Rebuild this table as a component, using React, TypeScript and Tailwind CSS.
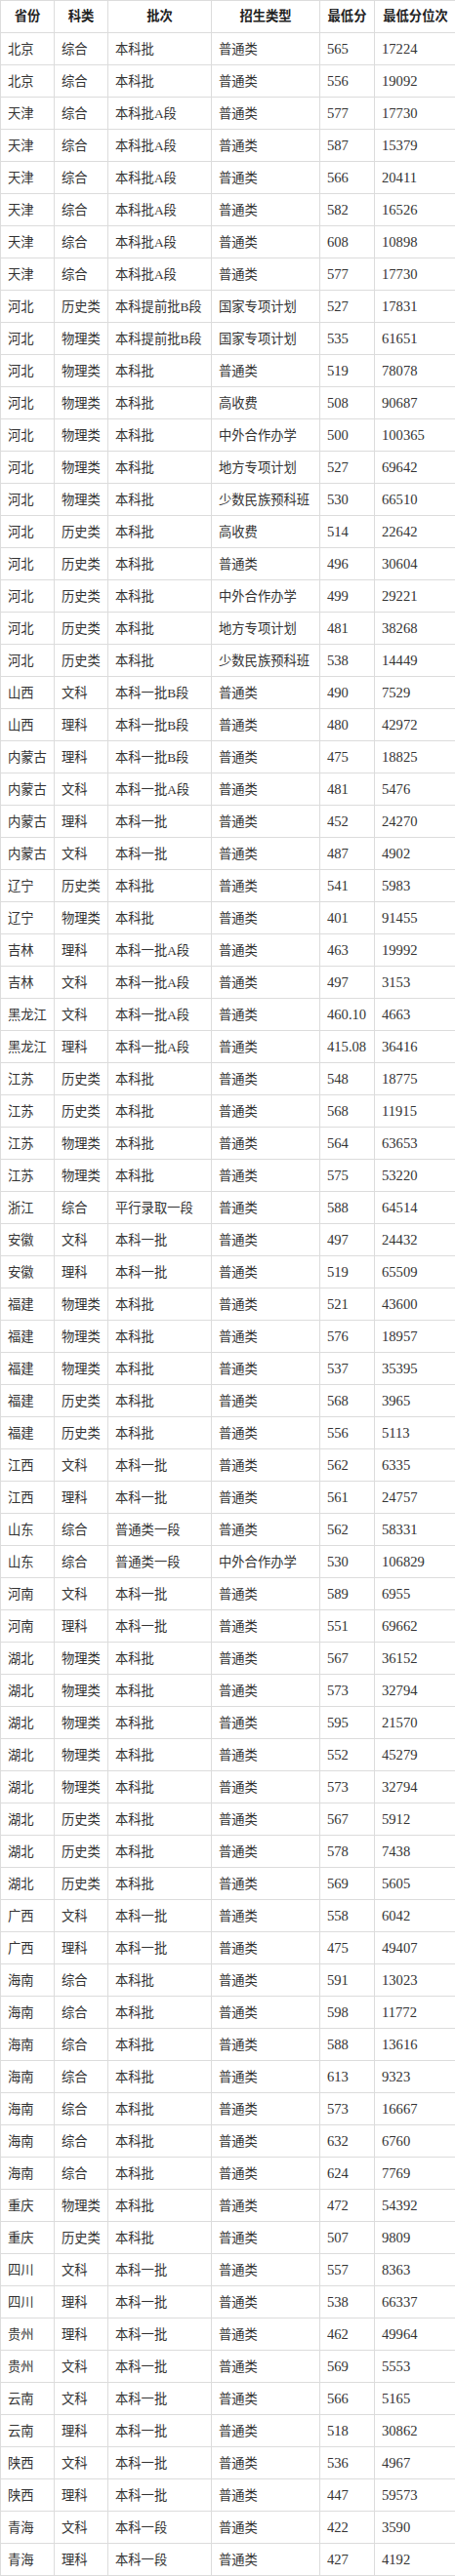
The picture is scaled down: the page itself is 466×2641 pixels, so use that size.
import React from "react";

const rows: string[][] = [
  ["北京", "综合", "本科批", "普通类", "565", "17224"],
  ["北京", "综合", "本科批", "普通类", "556", "19092"],
  ["天津", "综合", "本科批A段", "普通类", "577", "17730"],
  ["天津", "综合", "本科批A段", "普通类", "587", "15379"],
  ["天津", "综合", "本科批A段", "普通类", "566", "20411"],
  ["天津", "综合", "本科批A段", "普通类", "582", "16526"],
  ["天津", "综合", "本科批A段", "普通类", "608", "10898"],
  ["天津", "综合", "本科批A段", "普通类", "577", "17730"],
  ["河北", "历史类", "本科提前批B段", "国家专项计划", "527", "17831"],
  ["河北", "物理类", "本科提前批B段", "国家专项计划", "535", "61651"],
  ["河北", "物理类", "本科批", "普通类", "519", "78078"],
  ["河北", "物理类", "本科批", "高收费", "508", "90687"],
  ["河北", "物理类", "本科批", "中外合作办学", "500", "100365"],
  ["河北", "物理类", "本科批", "地方专项计划", "527", "69642"],
  ["河北", "物理类", "本科批", "少数民族预科班", "530", "66510"],
  ["河北", "历史类", "本科批", "高收费", "514", "22642"],
  ["河北", "历史类", "本科批", "普通类", "496", "30604"],
  ["河北", "历史类", "本科批", "中外合作办学", "499", "29221"],
  ["河北", "历史类", "本科批", "地方专项计划", "481", "38268"],
  ["河北", "历史类", "本科批", "少数民族预科班", "538", "14449"],
  ["山西", "文科", "本科一批B段", "普通类", "490", "7529"],
  ["山西", "理科", "本科一批B段", "普通类", "480", "42972"],
  ["内蒙古", "理科", "本科一批B段", "普通类", "475", "18825"],
  ["内蒙古", "文科", "本科一批A段", "普通类", "481", "5476"],
  ["内蒙古", "理科", "本科一批", "普通类", "452", "24270"],
  ["内蒙古", "文科", "本科一批", "普通类", "487", "4902"],
  ["辽宁", "历史类", "本科批", "普通类", "541", "5983"],
  ["辽宁", "物理类", "本科批", "普通类", "401", "91455"],
  ["吉林", "理科", "本科一批A段", "普通类", "463", "19992"],
  ["吉林", "文科", "本科一批A段", "普通类", "497", "3153"],
  ["黑龙江", "文科", "本科一批A段", "普通类", "460.10", "4663"],
  ["黑龙江", "理科", "本科一批A段", "普通类", "415.08", "36416"],
  ["江苏", "历史类", "本科批", "普通类", "548", "18775"],
  ["江苏", "历史类", "本科批", "普通类", "568", "11915"],
  ["江苏", "物理类", "本科批", "普通类", "564", "63653"],
  ["江苏", "物理类", "本科批", "普通类", "575", "53220"],
  ["浙江", "综合", "平行录取一段", "普通类", "588", "64514"],
  ["安徽", "文科", "本科一批", "普通类", "497", "24432"],
  ["安徽", "理科", "本科一批", "普通类", "519", "65509"],
  ["福建", "物理类", "本科批", "普通类", "521", "43600"],
  ["福建", "物理类", "本科批", "普通类", "576", "18957"],
  ["福建", "物理类", "本科批", "普通类", "537", "35395"],
  ["福建", "历史类", "本科批", "普通类", "568", "3965"],
  ["福建", "历史类", "本科批", "普通类", "556", "5113"],
  ["江西", "文科", "本科一批", "普通类", "562", "6335"],
  ["江西", "理科", "本科一批", "普通类", "561", "24757"],
  ["山东", "综合", "普通类一段", "普通类", "562", "58331"],
  ["山东", "综合", "普通类一段", "中外合作办学", "530", "106829"],
  ["河南", "文科", "本科一批", "普通类", "589", "6955"],
  ["河南", "理科", "本科一批", "普通类", "551", "69662"],
  ["湖北", "物理类", "本科批", "普通类", "567", "36152"],
  ["湖北", "物理类", "本科批", "普通类", "573", "32794"],
  ["湖北", "物理类", "本科批", "普通类", "595", "21570"],
  ["湖北", "物理类", "本科批", "普通类", "552", "45279"],
  ["湖北", "物理类", "本科批", "普通类", "573", "32794"],
  ["湖北", "历史类", "本科批", "普通类", "567", "5912"],
  ["湖北", "历史类", "本科批", "普通类", "578", "7438"],
  ["湖北", "历史类", "本科批", "普通类", "569", "5605"],
  ["广西", "文科", "本科一批", "普通类", "558", "6042"],
  ["广西", "理科", "本科一批", "普通类", "475", "49407"],
  ["海南", "综合", "本科批", "普通类", "591", "13023"],
  ["海南", "综合", "本科批", "普通类", "598", "11772"],
  ["海南", "综合", "本科批", "普通类", "588", "13616"],
  ["海南", "综合", "本科批", "普通类", "613", "9323"],
  ["海南", "综合", "本科批", "普通类", "573", "16667"],
  ["海南", "综合", "本科批", "普通类", "632", "6760"],
  ["海南", "综合", "本科批", "普通类", "624", "7769"],
  ["重庆", "物理类", "本科批", "普通类", "472", "54392"],
  ["重庆", "历史类", "本科批", "普通类", "507", "9809"],
  ["四川", "文科", "本科一批", "普通类", "557", "8363"],
  ["四川", "理科", "本科一批", "普通类", "538", "66337"],
  ["贵州", "理科", "本科一批", "普通类", "462", "49964"],
  ["贵州", "文科", "本科一批", "普通类", "569", "5553"],
  ["云南", "文科", "本科一批", "普通类", "566", "5165"],
  ["云南", "理科", "本科一批", "普通类", "518", "30862"],
  ["陕西", "文科", "本科一批", "普通类", "536", "4967"],
  ["陕西", "理科", "本科一批", "普通类", "447", "59573"],
  ["青海", "文科", "本科一段", "普通类", "422", "3590"],
  ["青海", "理科", "本科一段", "普通类", "427", "4192"],
];

const headers = ["省份", "科类", "批次", "招生类型", "最低分", "最低分位次"];

export default function App() {
  return (
    <div className="w-[467px] bg-white">
      <table
        className="w-[467px] table-fixed border-collapse text-[13.3px] text-[#333]"
        style={{ fontFamily: '"Liberation Serif", "Noto Sans CJK SC", serif' }}
      >
        <colgroup>
          <col className="w-[55px]" />
          <col className="w-[55px]" />
          <col className="w-[106px]" />
          <col className="w-[111px]" />
          <col className="w-[56px]" />
          <col className="w-[84px]" />
        </colgroup>
        <thead>
          <tr>
            {headers.map((h) => (
              <th
                key={h}
                className="h-[33px] border border-[#dcdcdc] p-0 text-center font-bold text-[#222] whitespace-nowrap"
              >
                {h}
              </th>
            ))}
          </tr>
        </thead>
        <tbody>
          {rows.map((r, i) => (
            <tr key={i}>
              {r.map((c, j) => (
                <td
                  key={j}
                  className={
                    j >= 4
                      ? "h-[33px] border border-[#dcdcdc] py-0 pl-[7px] pr-0 pt-[2px] text-left text-[14.6px] whitespace-nowrap"
                      : "h-[33px] border border-[#dcdcdc] py-0 pl-[7px] pr-0 pt-[2px] text-left whitespace-nowrap"
                  }
                >
                  {c}
                </td>
              ))}
            </tr>
          ))}
        </tbody>
      </table>
    </div>
  );
}
